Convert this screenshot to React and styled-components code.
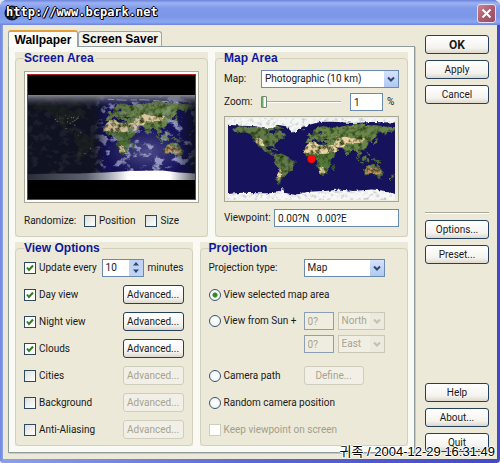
import React from "react";
import styled, { createGlobalStyle, css } from "styled-components";

const GlobalStyle = createGlobalStyle`
  *, *::before, *::after { box-sizing: border-box; }
  body { margin: 0; background: #dfe3ee; }
  body, button, input, select {
    font-family: Roboto, "Liberation Sans", "Noto Sans CJK KR", sans-serif;
    font-size: 10px;
    line-height: 12px;
    color: #1a1a1a;
  }
`;

const Window = styled.div`
  position: relative;
  display: flex;
  flex-direction: column;
  min-height: 100vh;
  border-radius: 7px 7px 4px 4px;
  background: linear-gradient(90deg, #6f87dc, #8ba0ea 3px, #5a68d8 50%, #4349c4);
  overflow: hidden;
`;

const TitleBar = styled.header`
  display: flex;
  align-items: center;
  justify-content: space-between;
  height: 25px;
  padding: 1px 4px 0;
  background: linear-gradient(#6b82da, #9db2f2 3px, #7f9aea 8px, #7c97e6 17px, #8ba7f2 22px, #6c84dc);
`;

const Globe = styled.svg`
  width: 16px;
  height: 16px;
`;

const CloseButton = styled.button`
  display: grid;
  place-items: center;
  width: 19px;
  height: 19px;
  padding: 0;
  border: 1px solid #dfe0f4;
  border-radius: 3px;
  background: linear-gradient(135deg, #c98591, #a85668 60%, #95536c);
`;

const Stamp = styled.span`
  position: absolute;
  white-space: nowrap;
  ${(p) =>
    p.$corner === "top"
      ? css`
          top: 5px;
          left: 6px;
          font: bold 12px/14px "DejaVu Sans Mono", monospace;
          color: #fff;
          text-shadow: 1px 0 #000, -1px 0 #000, 0 1px #000, 0 -1px #000, 1px 1px #000;
        `
      : css`
          right: 5px;
          bottom: 2px;
          font: 13px/18px "Liberation Sans", "Noto Sans CJK KR", sans-serif;
          color: #000;
          text-shadow: 1px 0 #fff, -1px 0 #fff, 0 1px #fff, 0 -1px #fff;
        `}
`;

const Body = styled.main`
  flex: 1;
  display: grid;
  grid-template-columns: 1fr 64px;
  column-gap: 10px;
  margin: 0 3px 4px 3px;
  padding: 5px 8px 6px 5px;
  background: #ece9d8;
`;

const Tabs = styled.div`
  display: flex;
  align-items: flex-end;
  height: 16px;
`;

const Tab = styled.button`
  position: relative;
  padding: 0;
  text-align: center;
  white-space: nowrap;
  font-family: "Liberation Sans", sans-serif;
  font-size: 12px;
  font-weight: bold;
  color: #000;
  border: 1px solid #9aa5ae;
  border-bottom: 0;
  border-radius: 3px 3px 0 0;
  ${(p) =>
    p.$active
      ? css`
          width: 70px;
          height: 17px;
          margin-bottom: -1px;
          background: #fcfcf8;
          border-top: 2px solid #e5a03a;
          z-index: 1;
        `
      : css`
          width: 84px;
          height: 15px;
          background: #f4f3ea;
        `}
`;

const Panel = styled.div`
  display: flex;
  flex-direction: column;
  gap: 5px;
  padding: 5px 6px 6px;
  border: 1px solid #919b9c;
  box-shadow: 1px 1px #c9c8bb;
  background: #fafaf5;
`;

const PanelRow = styled.div`
  display: flex;
  gap: 7px;
`;

const GroupArea = styled.div`
  flex: ${(p) => p.$share} 1 0;
  min-width: 0;
  display: flex;
  background: #ece9d8;
`;

const GroupBox = styled.fieldset`
  flex: 1;
  min-width: 0;
  margin: 0;
  padding: 0 8px 6px;
  border: 1px solid #d2d0bd;
  border-radius: 4px;
`;

const Legend = styled.legend`
  padding: 0 2px 0 0;
  font-family: "Liberation Sans", sans-serif;
  font-size: 12px;
  font-weight: bold;
  color: #10189c;
`;

const Stack = styled.div`
  display: flex;
  flex-direction: column;
  gap: ${(p) => p.$gap}px;
  padding-top: ${(p) => p.$top}px;
`;

const Row = styled.div`
  display: flex;
  align-items: center;
  justify-content: ${(p) => (p.$spread ? "space-between" : "flex-start")};
  gap: ${(p) => p.$gap || 0}px;
  min-height: ${(p) => p.$height || 19}px;
`;

const Name = styled.label`
  flex: none;
  width: ${(p) => (p.$width ? `${p.$width}px` : "auto")};
  white-space: nowrap;
`;

const ChoiceLabel = styled.label`
  display: flex;
  align-items: center;
  gap: 3px;
  white-space: nowrap;
  color: ${(p) => (p.$off ? "#a19f8d" : "inherit")};
`;

const Tick = styled.input`
  appearance: none;
  flex: none;
  width: 12px;
  height: 12px;
  margin: 0;
  border: 1px solid #2c4a60;
  background: linear-gradient(135deg, #dedfdb, #fff);
  &:checked {
    background: #fdfdfa
      url("data:image/svg+xml,%3Csvg xmlns='http://www.w3.org/2000/svg' viewBox='0 0 10 10'%3E%3Cpath d='M2 4.5 4 7 8 2.5' fill='none' stroke='%23347a24' stroke-width='2'/%3E%3C/svg%3E");
  }
  &:disabled { border-color: #cfcdbd; background: #fff; }
`;

const Radio = styled.input`
  appearance: none;
  flex: none;
  width: 12px;
  height: 12px;
  margin: 0;
  border: 1px solid #37566f;
  border-radius: 50%;
  background: radial-gradient(#fff, #eceff0);
  &:checked { background: radial-gradient(circle, #2f8a20 0 2px, #fafaf6 3px); }
`;

const PushButton = styled.button`
  width: ${(p) => (p.$width ? `${p.$width}px` : "100%")};
  height: 19px;
  padding: 0;
  border: 1px solid #24405c;
  border-radius: 3px;
  background: linear-gradient(#fff, #f4f3ee 70%, #dcd8cc);
  white-space: nowrap;
  ${(p) => p.$main && css`font-size: 12px; font-weight: bold;`}
  &:disabled { color: #a5a391; border-color: #cfcdbb; background: #f2f0e6; }
`;

const TextBox = styled.input`
  width: ${(p) => (p.$width ? `${p.$width}px` : "auto")};
  flex: ${(p) => (p.$width ? "none" : "1")};
  min-width: 0;
  height: 18px;
  padding: 0 3px;
  border: 1px solid #6b8ab0;
  background: #fff;
  &:disabled { color: #a5a391; background: #efece0; border-color: #8b9eb2; }
`;

const SelectFrame = styled.span`
  display: grid;
  flex: ${(p) => (p.$width ? "none" : "1")};
  width: ${(p) => (p.$width ? `${p.$width}px` : "auto")};
  height: 18px;
  border: 1px solid ${(p) => (p.$off ? "#c9c7b6" : "#6b8ab0")};
  background: ${(p) => (p.$off ? "#f1efe4" : "#fff")};
  > * { grid-area: 1 / 1; }
`;

const Select = styled.select`
  appearance: none;
  width: 100%;
  min-width: 0;
  padding: 0 15px 0 3px;
  border: 0;
  background: transparent;
  &:disabled { color: #a5a391; opacity: 1; }
`;

const Arrow = styled.svg`
  justify-self: end;
  width: 14px;
  height: 16px;
  pointer-events: none;
  background: ${(p) => (p.$off ? "#eceade" : "linear-gradient(#d5e2fc, #b0c8f4)")};
  color: ${(p) => (p.$off ? "#c2c0b0" : "#33476b")};
`;

const Spinner = styled.span`
  display: flex;
  width: 42px;
  height: 18px;
  border: 1px solid #6b8ab0;
  background: #fff;
`;

const SpinnerInput = styled.input`
  flex: 1;
  min-width: 0;
  padding: 0 3px;
  border: 0;
  background: transparent;
`;

const SpinnerArrows = styled.span`
  display: grid;
  width: 14px;
`;

const SpinnerButton = styled.button`
  display: grid;
  place-items: center;
  padding: 0;
  border: 0;
  background: #c0d3f6;
`;

const Slider = styled.input`
  appearance: none;
  flex: none;
  width: 80px;
  height: 14px;
  margin: 0 5px 0 0;
  background: transparent;
  &::-webkit-slider-runnable-track { height: 2px; background: #a8aa9f; border-bottom: 1px solid #fff; }
  &::-webkit-slider-thumb {
    appearance: none;
    width: 6px;
    height: 12px;
    margin-top: -5px;
    border: 1px solid #6f8a78;
    border-radius: 1px;
    background: linear-gradient(90deg, #6fae68 1px, #fafaf6 2px);
  }
`;

const PictureFrame = styled.div`
  padding: ${(p) => (p.$night ? "2px" : "1px 3px")};
  border: 1px solid #a7a794;
  background: ${(p) => (p.$night ? "#fff" : "#eeece0")};
`;

const NightScreen = styled.div`
  display: flex;
  align-items: center;
  height: 126px;
  border: 1px solid #b3202a;
  background: #000;
`;

const MapDrawing = styled.svg`
  display: block;
  width: 100%;
  height: ${(p) => p.$height}px;
`;

const SideBar = styled.nav`
  display: flex;
  flex-direction: column;
  gap: 6px;
  padding: 5px 0 1px;
`;

const Divider = styled.hr`
  width: 100%;
  margin: 102px 0 0;
  border: 0;
  border-top: 1px solid #aaa899;
  border-bottom: 1px solid #fff;
`;

const Spacer = styled.div`
  flex: 1;
`;

const SunRow = styled.div`
  display: grid;
  grid-template-columns: 91px 30px 47px;
  align-content: start;
  column-gap: 4px;
  row-gap: 5px;
  height: 46px;
`;

const SecondLine = styled(TextBox)`
  grid-column: 2;
`;

const WEST = "M-168 66-156 71-140 70-125 70-110 68-95 68-94 72-85 69-82 67-94 60-92 57-82 55-80 51-78 55-77 62-70 61-65 58-56 52-65 49-60 46-70 43-75 38-81 31-80 25-83 29-90 29-97 27-97 21-91 18-87 21-88 16-83 15-83 10-78 8-85 9-95 15-105 19-109 25-114 31-110 23-117 33-124 40-124 48-133 56-145 60-153 58-163 55-158 59-165 61ZM-78 8-72 12-62 10-52 5-50 0-35-6-39-14-41-22-48-26-54-34-58-38-65-42-67-48-69-54-74-52-75-45-73-37-70-20-76-14-81-6-80 0ZM-85 22-75 20-72 18-78 22ZM-88 64-80 64-82 66ZM-120 70-106 69-106 73-118 73ZM-90 73-70 64-62 66-78 75Z";
const AFRICA = "M-17 15-17 21-10 30-6 35 10 37 11 33 20 31 32 31 35 27 43 12 51 12 47 4 40-4 40-15 35-22 32-29 26-34 18-34 12-18 13-8 9 0 9 4-4 5-9 5-13 9ZM49-12 50-16 47-25 44-24 44-17Z";
const EURASIA = "M-10 37-9 43-1 44-4 48 4 52 8 57 12 55 20 55 24 59 21 62 25 65 18 61 12 56 5 59 6 62 15 69 28 71 40 67 44 68 60 69 70 72 80 73 105 78 115 74 140 73 160 70 180 69 180 65 172 61 163 60 162 56 157 51 156 58 162 62 150 59 136 55 141 52 135 44 129 41 129 35 126 37 122 40 118 38 122 36 121 30 117 24 109 21 106 18 109 12 105 9 101 13 103 2 100 6 98 15 94 17 90 22 82 16 80 10 77 8 73 18 70 22 66 25 57 26 50 30 56 24 59 22 53 16 43 13 35 28 35 36 27 37 26 40 41 41 38 46 30 45 28 41 23 37 19 42 13 45 18 40 15 38 10 44 3 43-1 37-6 36ZM-5 50 1 51-2 57-6 58ZM-10 52-6 52-7 55ZM-23 64-14 65-20 66ZM131 32 141 36 141 42 137 37ZM141 42 145 44 142 46Z";
const OCEANIA = "M114-22 122-17 131-12 136-12 136-16 140-17 142-11 146-19 153-27 150-37 144-39 138-35 130-32 116-35ZM109 1 117 7 118 1 115-4 110-3ZM95 5 104-3 106-6 100-1ZM106-7 115-8 114-9 106-8ZM131-1 141-3 150-9 143-9 137-6ZM120 1 124 0 122-5 120-4ZM120 18 123 14 126 7 122 11ZM173-35 178-38 174-41ZM172-41 174-42 168-47 167-45ZM145-41 148-41 147-44Z";
const DESERT = "M-17 15-17 22-10 30-3 35 10 36 12 32 20 30 32 30 36 23 39 14 25 11 0 12ZM36 30 48 31 58 22 52 15 44 13ZM48 30 52 38 62 42 75 38 72 26 57 26ZM52 47 75 49 85 45 105 46 118 45 107 36 80 34 65 38ZM14-17 25-19 30-30 18-33ZM-119 46-106 43-101 28-110 29-117 35ZM-71-20-66-22-66-42-72-46Z";
const OUTBACK = "M115-22 124-18 136-19 148-22 150-32 139-34 129-31 116-33Z";
const CITIES = "M-122 38h2M-118 34h2M-95 40h2M-90 30h2M-87 42h2M-83 42h2M-80 36h2M-77 39h2M-74 41h3M-84 34h2M-96 33h2M-99 19h2M-46-23h2M-58-34h2M-67 10h2M-112 41h1M-105 40h1M-80 26h2M-71 45h1M-72 5h1M-100 47h1M-92 45h1";

function WorldMap({ night, height }) {
  const key = night ? "night" : "day";
  return (
    <MapDrawing $height={height} viewBox="0 0 360 180" preserveAspectRatio="none" role="img" aria-label="World map">
      <defs>
        <filter id={`${key}-terrain`} x="0" y="0" width="100%" height="100%" colorInterpolationFilters="sRGB">
          <feTurbulence type="fractalNoise" baseFrequency=".1" numOctaves="4" seed="5" result="n" />
          <feDisplacementMap in="SourceGraphic" in2="n" scale="8" xChannelSelector="R" yChannelSelector="G" result="land" />
          <feColorMatrix in="n" values="0 0 0 0 .14  0 0 0 0 .22  0 0 0 0 .06  0 0 2.4 0 -1.05" />
          <feComposite in2="land" operator="in" result="shade" />
          <feMerge><feMergeNode in="land" /><feMergeNode in="shade" /></feMerge>
        </filter>
        <filter id={`${key}-cloud`} x="0" y="0" width="100%" height="100%" colorInterpolationFilters="sRGB">
          <feTurbulence type="fractalNoise" baseFrequency=".045 .06" numOctaves="6" seed="21" />
          <feColorMatrix values="0 0 0 0 .8  0 0 0 0 .82  0 0 0 0 .94  0 7 0 0 -3.7" />
        </filter>
        <filter id={`${key}-ice`} x="0" y="0" width="100%" height="100%" colorInterpolationFilters="sRGB">
          <feTurbulence type="fractalNoise" baseFrequency=".12" numOctaves="3" result="n" />
          <feDisplacementMap in="SourceGraphic" in2="n" scale="8" xChannelSelector="R" yChannelSelector="G" result="snow" />
          <feColorMatrix in="n" values="0 0 0 0 .76  0 0 0 0 .79  0 0 0 0 .77  3 0 0 0 -1.5" />
          <feComposite in2="snow" operator="in" result="grey" />
          <feMerge><feMergeNode in="snow" /><feMergeNode in="grey" /></feMerge>
        </filter>
        <linearGradient id={`${key}-dusk`}>
          <stop offset="0" stopColor="#0f121a" stopOpacity=".9" />
          <stop offset=".4" stopColor="#0f121a" stopOpacity=".88" />
          <stop offset=".47" stopColor="#0b0d18" stopOpacity=".15" />
          <stop offset=".88" stopColor="#0b0d18" stopOpacity="0" />
          <stop offset="1" stopColor="#0b0d14" stopOpacity=".85" />
        </linearGradient>
        <linearGradient id={`${key}-south`}>
          <stop offset="0" stopColor="#2a2e38" />
          <stop offset=".35" stopColor="#5c616d" />
          <stop offset=".48" stopColor="#a4a8b2" />
          <stop offset=".6" stopColor="#fff" />
          <stop offset=".85" stopColor="#fff" />
          <stop offset="1" stopColor="#62656e" />
        </linearGradient>
        <linearGradient id={`${key}-north`} x2="0" y2="1">
          <stop offset="0" stopColor="#85878e" />
          <stop offset="1" stopColor="#454955" stopOpacity="0" />
        </linearGradient>
        <radialGradient id={`${key}-haze`}>
          <stop offset="0" stopColor="#8f90c4" stopOpacity=".5" />
          <stop offset="1" stopColor="#6c6db0" stopOpacity="0" />
        </radialGradient>
      </defs>
      <rect width="360" height="180" fill="#16125c" />
      {night && (
        <g>
          <ellipse cx="255" cy="120" rx="90" ry="55" fill={`url(#${key}-haze)`} />
          <rect width="360" height="180" filter={`url(#${key}-cloud)`} opacity=".6" />
        </g>
      )}
      <g filter={`url(#${key}-terrain)`}>
        <rect width="360" height="180" fill="none" />
        <g transform="translate(180 90) scale(1 -1)" strokeWidth="1.5">
          <path d={WEST} fill="#62794a" stroke="#62794a" />
          <path d={AFRICA} fill="#54773a" stroke="#54773a" />
          <path d={EURASIA} fill="#6b864a" stroke="#6b864a" />
          <path d={OCEANIA} fill="#5e7e42" stroke="#5e7e42" />
          <path d={DESERT} fill="#ecd3a4" />
          <path d={OUTBACK} fill="#c8936a" />
        </g>
      </g>
      {!night && (
        <g filter={`url(#${key}-ice)`}>
          <path d="M-30-30H390V8L360 10 310 9 270 11 230 8 200 8 175 15 160 20 148 28 140 32 134 27 126 18 105 15 98 21 80 23 60 18 30 17 0 15-30 15Z" fill="#f4f6f6" />
          <path d="M-30 167 0 167 30 164 60 165 90 165 108 163 118 154 122 164 145 169 170 162 210 160 240 157 270 160 310 157 345 161 360 167 390 167V210H-30Z" fill="#f6f7f6" />
        </g>
      )}
      {night && (
        <g>
          <rect width="360" height="180" filter={`url(#${key}-cloud)`} opacity=".2" />
          <rect width="360" height="180" fill={`url(#${key}-dusk)`} />
          <path d="M0 168 60 166 110 166 165 164 220 161 290 160 325 164 360 166V180H0Z" fill={`url(#${key}-south)`} />
          <rect width="360" height="24" fill={`url(#${key}-north)`} />
          <path d="M172 9 210 11 250 10 300 14 325 17" fill="none" stroke="#dfe3ee" strokeDasharray="14 5 22 8" />
          <path d={CITIES} transform="translate(180 90) scale(1 -1)" stroke="#a5a69c" strokeWidth="1.5" />
        </g>
      )}
      {!night && <circle cx="180" cy="90" r="9" fill="#fb0b0b" stroke="#8d1010" />}
    </MapDrawing>
  );
}

function Group({ title, share = 1, children }) {
  return (
    <GroupArea $share={share}>
      <GroupBox>
        <Legend>{title}</Legend>
        {children}
      </GroupBox>
    </GroupArea>
  );
}

function Check({ children, ...rest }) {
  return (
    <ChoiceLabel $off={rest.disabled}>
      <Tick type="checkbox" {...rest} />
      {children}
    </ChoiceLabel>
  );
}

function Choice({ children, ...rest }) {
  return (
    <ChoiceLabel>
      <Radio type="radio" name="viewMode" {...rest} />
      {children}
    </ChoiceLabel>
  );
}

function DropDown({ options, width, disabled, ...rest }) {
  return (
    <SelectFrame $width={width} $off={disabled}>
      <Select disabled={disabled} {...rest}>
        {options.map((o) => (
          <option key={o}>{o}</option>
        ))}
      </Select>
      <Arrow $off={disabled} viewBox="0 0 14 16" aria-hidden="true">
        <path d="M4 6.5 7 9.5 10 6.5" fill="none" stroke="currentColor" strokeWidth="2" />
      </Arrow>
    </SelectFrame>
  );
}

const LAYERS = [
  ["Day view", true],
  ["Night view", true],
  ["Clouds", true],
  ["Cities", false],
  ["Background", false],
  ["Anti-Aliasing", false],
];

export default function App() {
  return (
    <Window>
      <GlobalStyle />
      <TitleBar>
        <Globe viewBox="0 0 16 16" aria-hidden="true">
          <circle cx="8" cy="8" r="7.5" fill="#111a35" />
          <path d="M3 5 7 2l4 1-2 4-4 1ZM9 9l3 1-2 4-2-2Z" fill="#53657c" />
        </Globe>
        <CloseButton type="button" aria-label="Close">
          <svg width="11" height="11" viewBox="0 0 11 11">
            <path d="M1.5 1.5 9.5 9.5M9.5 1.5 1.5 9.5" stroke="#fff" strokeWidth="2" />
          </svg>
        </CloseButton>
      </TitleBar>
      <Body>
        <div>
          <Tabs role="tablist">
            <Tab type="button" role="tab" aria-selected="true" $active>Wallpaper</Tab>
            <Tab type="button" role="tab" aria-selected="false">Screen Saver</Tab>
          </Tabs>
          <Panel>
            <PanelRow>
              <Group title="Screen Area">
                <Stack $top={7} $gap={8}>
                  <PictureFrame $night>
                    <NightScreen>
                      <WorldMap night height={85} />
                    </NightScreen>
                  </PictureFrame>
                  <Row $gap={10}>
                    <Name as="span" $width={50}>Randomize:</Name>
                    <Check>Position</Check>
                    <Check>Size</Check>
                  </Row>
                </Stack>
              </Group>
              <Group title="Map Area">
                <Stack $top={5} $gap={5}>
                  <Row>
                    <Name htmlFor="map" $width={37}>Map:</Name>
                    <DropDown id="map" options={["Photographic (10 km)"]} />
                  </Row>
                  <Row $height={18}>
                    <Name htmlFor="zoom" $width={37}>Zoom:</Name>
                    <Row $gap={4} $height={18}>
                      <Slider id="zoom" type="range" defaultValue="0" />
                      <TextBox $width={33} defaultValue="1" aria-label="Zoom percentage" />
                      <span>%</span>
                    </Row>
                  </Row>
                  <PictureFrame>
                    <WorldMap height={82} />
                  </PictureFrame>
                  <Row $height={22}>
                    <Name htmlFor="viewpoint" $width={50}>Viewpoint:</Name>
                    <TextBox id="viewpoint" defaultValue={"0.00?N\u00a0\u00a0\u00a00.00?E"} />
                  </Row>
                </Stack>
              </Group>
            </PanelRow>
            <PanelRow>
              <Group title="View Options" share={178}>
                <Stack $top={4} $gap={8}>
                  <Row $spread>
                    <Check defaultChecked>Update every</Check>
                    <Row $gap={4}>
                      <Spinner>
                        <SpinnerInput defaultValue="10" aria-label="Update interval" />
                        <SpinnerArrows>
                          <SpinnerButton type="button" aria-label="Increase">
                            <svg width="8" height="5" viewBox="0 0 8 5"><path d="M1 4.5 4 1 7 4.5Z" fill="#33476b" /></svg>
                          </SpinnerButton>
                          <SpinnerButton type="button" aria-label="Decrease">
                            <svg width="8" height="5" viewBox="0 0 8 5"><path d="M1 .5 4 4 7 .5Z" fill="#33476b" /></svg>
                          </SpinnerButton>
                        </SpinnerArrows>
                      </Spinner>
                      <span>minutes</span>
                    </Row>
                  </Row>
                  {LAYERS.map(([name, on]) => (
                    <Row key={name} $spread>
                      <Check defaultChecked={on}>{name}</Check>
                      <PushButton type="button" $width={61} disabled={!on}>Advanced...</PushButton>
                    </Row>
                  ))}
                </Stack>
              </Group>
              <Group title="Projection" share={209}>
                <Stack $top={4} $gap={8}>
                  <Row>
                    <Name htmlFor="projection" $width={95}>Projection type:</Name>
                    <DropDown id="projection" width={81} options={["Map"]} />
                  </Row>
                  <Row><Choice defaultChecked>View selected map area</Choice></Row>
                  <SunRow>
                    <Choice>View from Sun +</Choice>
                    <TextBox $width={30} defaultValue="0?" disabled aria-label="Latitude offset" />
                    <DropDown width={47} disabled options={["North"]} aria-label="Latitude direction" />
                    <SecondLine $width={30} defaultValue="0?" disabled aria-label="Longitude offset" />
                    <DropDown width={47} disabled options={["East"]} aria-label="Longitude direction" />
                  </SunRow>
                  <Row>
                    <Name as="span" $width={95}><Choice>Camera path</Choice></Name>
                    <PushButton type="button" $width={60} disabled>Define...</PushButton>
                  </Row>
                  <Row><Choice>Random camera position</Choice></Row>
                  <Row><Check disabled>Keep viewpoint on screen</Check></Row>
                </Stack>
              </Group>
            </PanelRow>
          </Panel>
        </div>
        <SideBar>
          <PushButton type="button" $main>OK</PushButton>
          <PushButton type="button">Apply</PushButton>
          <PushButton type="button">Cancel</PushButton>
          <Divider />
          <PushButton type="button">Options...</PushButton>
          <PushButton type="button">Preset...</PushButton>
          <Spacer />
          <PushButton type="button">Help</PushButton>
          <PushButton type="button">About...</PushButton>
          <PushButton type="button">Quit</PushButton>
        </SideBar>
      </Body>
      <Stamp $corner="top">http://www.bcpark.net</Stamp>
      <Stamp $corner="bottom">귀족 / 2004-12-29 16:31:49</Stamp>
    </Window>
  );
}
